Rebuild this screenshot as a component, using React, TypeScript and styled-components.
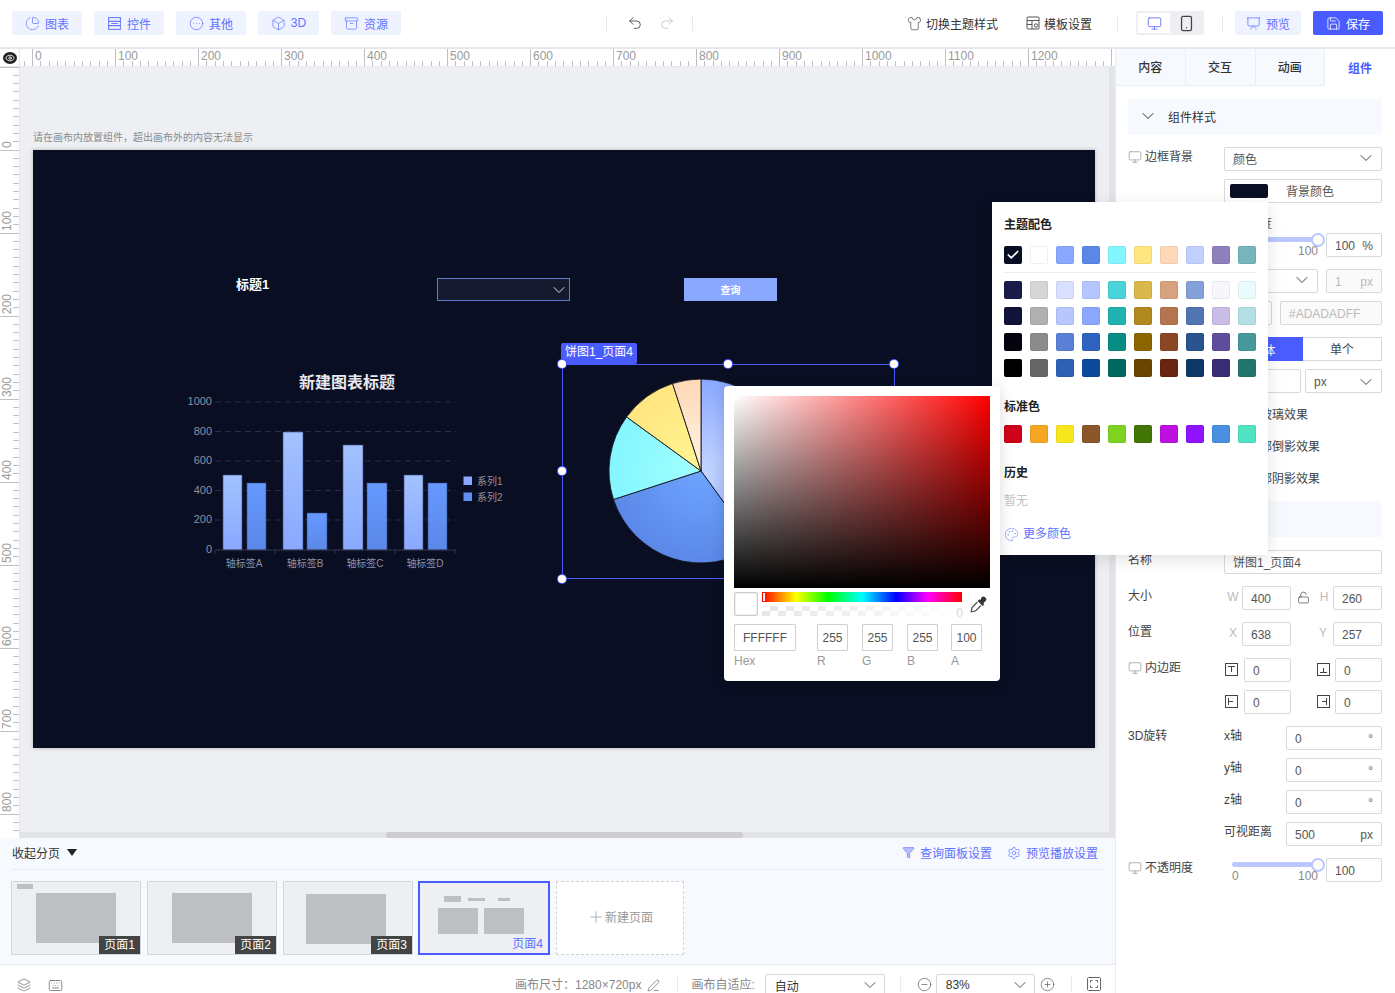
import React from "react";
import styled, { createGlobalStyle } from "styled-components";
import {
  Archive, Box, ChartPie, Check, ChevronDown, CircleEllipsis, CircleMinus, CirclePlus, Eye, Funnel, Keyboard, Layers,
  LockOpen, Monitor, Palette, PenLine, Plus, Presentation, Redo2, Save, Settings, Shirt, Smartphone, Undo2,
} from "lucide-react";

const BLUE = "#4a5cff";
const FONT = `"Liberation Sans", "Noto Sans CJK SC", sans-serif`;

const Global = createGlobalStyle`
  html, body { margin: 0; padding: 0; height: 993px; overflow: hidden; background: #fff; }
  body { font-family: ${FONT}; font-size: 12px; color: #333; }
  * { box-sizing: border-box; }
`;

const Page = styled.div`
  position: relative; width: 1395px; height: 993px; overflow: hidden;
  display: flex; flex-direction: column;
`;

/* ---------- top bar ---------- */
const TopBar = styled.header`
  height: 49px; flex: none; display: flex; align-items: center; padding: 0 12px 1px 12px;
  border-bottom: 2px solid #e6e7ec; background: #fff;
`;
const ToolGroup = styled.div`display: flex; gap: 12px;`;
const SoftButton = styled.button<{ $w: number }>`
  width: ${p => p.$w}px; height: 24px; border: 0; border-radius: 2px; background: #eff3ff; color: #5f70ff;
  font: 12px ${FONT}; display: flex; align-items: center; justify-content: center; gap: 5px; padding: 0;
  svg { color: #6a7bff; }
`;
const SaveButton = styled(SoftButton)`background: ${BLUE}; color: #fff; margin-left: 12px; svg { color: #fff; }`;
const VSep = styled.i<{ $ml: number; $mr: number }>`
  width: 1px; height: 16px; background: #e8e9ed; margin-left: ${p => p.$ml}px; margin-right: ${p => p.$mr}px; flex: none;
`;
const HistoryIcons = styled.div`display: flex; gap: 16px; width: 48px; color: #444;`;
const TextAction = styled.div<{ $ml: number }>`
  display: flex; align-items: center; gap: 4px; margin-left: ${p => p.$ml}px; color: #333; svg { color: #555; }
`;
const DeviceToggle = styled.div`
  width: 68px; height: 24px; padding: 2px; background: #eeeff3; border-radius: 2px; display: flex;
`;
const DeviceBtn = styled.div<{ $on?: boolean }>`
  width: 32px; display: flex; align-items: center; justify-content: center;
  background: ${p => (p.$on ? "#fff" : "transparent")}; color: ${p => (p.$on ? "#5f70ff" : "#444")};
`;

/* ---------- body ---------- */
const Body = styled.div`flex: 1; min-height: 0; display: flex;`;
const Editor = styled.main`width: 1115px; flex: none; display: flex; flex-direction: column;`;
const RulerRow = styled.div`height: 18px; flex: none; display: flex; background: #fff; border-bottom: 1px solid #e6e7ec;`;
const Corner = styled.div`
  width: 20px; flex: none; display: flex; align-items: center; justify-content: center; border-right: 1px solid #e6e7ec;
`;
const EyeBadge = styled.span`
  width: 14px; height: 12px; border-radius: 50%; background: #222; color: #fff; display: flex; align-items: center; justify-content: center;
`;
const RulerH = styled.svg`flex: 1; display: block; height: 17px; overflow: hidden;`;
const CanvasRow = styled.div`height: 771px; flex: none; display: flex;`;
const RulerV = styled.svg`width: 20px; flex: none; display: block; background: #fff;`;
const CanvasArea = styled.div`position: relative; flex: 1; background: #eeeff3; overflow: hidden;`;
const Hint = styled.div`position: absolute; left: 13px; top: 64px; font-size: 10px; line-height: 14px; color: #8b8b8b;`;
const Stage = styled.div`
  position: absolute; left: 13px; top: 83px; width: 1062px; height: 598px; background: #0a0e22;
  box-shadow: 0 0 4px rgba(0,0,0,.25);
`;
const ScrollV = styled.div`position: absolute; top: 0; bottom: 0; right: 0; width: 6px; background: #e3e4e8;`;
const ScrollH = styled.div`position: absolute; left: 0; right: 0; bottom: 0; height: 6px; background: #e3e4e8;`;
const ScrollThumb = styled.div`position: absolute; left: 366px; width: 357px; top: 0; bottom: 0; background: #cdcdd0; border-radius: 3px;`;

const StageTitle = styled.div`position: absolute; left: 203px; top: 126px; color: #fff; font-weight: 700; font-size: 13px; line-height: 18px;`;
const StageSelect = styled.div`
  position: absolute; left: 404px; top: 128px; width: 133px; height: 23px; background: #151a2e; border: 1px solid #5b7cc9;
  display: flex; align-items: center; justify-content: flex-end; color: #ddd;
`;
const StageButton = styled.div`
  position: absolute; left: 651px; top: 128px; width: 93px; height: 23px; background: #8aa8ff; color: #fff; font-size: 10px; font-weight: 700;
  display: flex; align-items: center; justify-content: center;
`;
const ChartSvg = styled.svg`position: absolute; display: block;`;
const Selection = styled.div`
  position: absolute; left: 529px; top: 214px; width: 333px; height: 215px; border: 1px solid ${BLUE};
`;
const SelLabel = styled.div`
  position: absolute; left: -2px; top: -22px; width: 76px; height: 21px; background: ${BLUE}; color: #fff; border-radius: 2px;
  font-size: 12px; line-height: 19px; text-align: center; white-space: nowrap;
`;
const Handle = styled.i<{ $x: number; $y: number }>`
  position: absolute; left: ${p => p.$x}px; top: ${p => p.$y}px; width: 8px; height: 8px; margin: -4px 0 0 -4px; border-radius: 50%;
  background: #fff; box-shadow: 0 0 0 1px ${BLUE};
`;

/* ---------- pages ---------- */
const PagesPanel = styled.section`
  height: 127px; flex: none; background: #f6f9fd; padding: 0 12px; border-bottom: 1px solid #e6e7ec;
`;
const PagesHead = styled.div`
  height: 32px; display: flex; align-items: center; justify-content: space-between; border-bottom: 1px solid #e8ecf2;
  padding: 0 5px 2px 0;
`;
const Collapse = styled.div`display: flex; align-items: center; gap: 7px; color: #333;`;
const Tri = styled.i`width: 0; height: 0; border: 5.5px solid transparent; border-top: 7px solid #222; border-bottom: 0;`;
const Links = styled.div`display: flex; align-items: center; color: #5f70ff; gap: 5px; svg { color: #6a7bff; }`;
const LinkGap = styled.span`width: 5px;`;
const Thumbs = styled.div`display: flex; margin: 11px 0 0 -1px; gap: 6px;`;
const Thumb = styled.div<{ $active?: boolean }>`
  position: relative; width: ${p => (p.$active ? 132 : 130)}px; height: 74px; background: #eeeff3; margin-left: ${p => (p.$active ? -1 : 0)}px;
  border: ${p => (p.$active ? `2px solid ${BLUE}` : "1px solid #d4d6db")}; overflow: hidden;
`;
const Ghost = styled.i<{ $x: number; $y: number; $w: number; $h: number }>`
  position: absolute; left: ${p => p.$x}px; top: ${p => p.$y}px; width: ${p => p.$w}px; height: ${p => p.$h}px; background: #bebfc3;
`;
const ThumbName = styled.span<{ $active?: boolean }>`
  position: absolute; right: 0; bottom: 0; width: 41px; height: 18px; line-height: 18px; text-align: center;
  background: ${p => (p.$active ? "transparent" : "#444")}; color: ${p => (p.$active ? "#5f70ff" : "#fff")};
`;
const NewPage = styled.div`
  width: 128px; height: 74px; border: 1px dashed #d0d2d8; background: #fff; color: #999; display: flex; align-items: center; justify-content: center;
  padding-bottom: 3px;
`;

/* ---------- status ---------- */
const Status = styled.footer`flex: 1; min-height: 0; display: flex; align-items: flex-start; background: #fff; position: relative; color: #888;`;
const StatusLeft = styled.div`display: flex; gap: 17px; padding: 13px 0 0 17px; color: #666; width: 515px;`;
const StatusText = styled.div`display: flex; align-items: center; padding-top: 12px; line-height: 16px; gap: 6px; white-space: nowrap; svg { color: #666; }`;
const StatusSelect = styled.div<{ $w: number; $ml: number }>`
  width: ${p => p.$w}px; margin-left: ${p => p.$ml}px; height: 24px; margin-top: 9px; border: 1px solid #d9d9d9; border-radius: 2px;
  display: flex; align-items: center; justify-content: space-between; padding: 0 4px 2px 9px; color: #333; flex: none;
  svg { color: #555; }
`;
const StatusIcon = styled.span<{ $ml: number; $mr?: number }>`margin: 12px ${p => p.$mr || 0}px 0 ${p => p.$ml}px; display: flex; color: #666;`;
const StatusSep = styled(VSep)`margin-top: 12px; height: 14px;`;

/* ---------- right panel ---------- */
const Panel = styled.aside`
  width: 280px; flex: none; border-left: 1px solid #e8eef5; background: #fff; display: flex; flex-direction: column;
`;
const Tabs = styled.nav`height: 37px; display: flex; background: #f6f9fd; border-bottom: 1px solid #e8eef5; flex: none;`;
const Tab = styled.div<{ $on?: boolean }>`
  width: 70px; display: flex; align-items: center; justify-content: center; font-weight: ${p => (p.$on ? 700 : 500)};
  color: ${p => (p.$on ? BLUE : "#333")}; background: ${p => (p.$on ? "#fff" : "transparent")}; padding-bottom: 1px;
  border-right: ${p => (p.$on ? "0" : "1px solid #e8eef5")}; margin-bottom: ${p => (p.$on ? "-1px" : "0")};
`;
const PanelBody = styled.div`padding: 13px 13px 0 12px;`;
const SectionHead = styled.div<{ $mt?: number; $mb?: number }>`
  height: 36px; background: #f6f9fd; display: flex; align-items: center; padding: 0 0 2px 10px; gap: 10px; color: #333;
  margin-top: ${p => p.$mt ?? 0}px; margin-bottom: ${p => p.$mb ?? 12}px;
`;
const Row = styled.div<{ $mb?: number }>`display: flex; align-items: flex-start; height: 24px; margin-bottom: ${p => p.$mb ?? 8}px;`;
const RowLabel = styled.div`
  width: 96px; flex: none; height: 18px; padding-top: 2px; line-height: 16px; display: flex; align-items: center; gap: 3px; color: #444; svg { color: #888; }
`;
const Field = styled.div<{ $w?: number; $ml?: number; $muted?: boolean; $cjk?: boolean }>`
  ${p => (p.$w ? `width:${p.$w}px;flex:none;` : "flex:1;")}
  margin-left: ${p => p.$ml ?? 0}px; height: 24px; border: 1px solid #d9d9d9; border-radius: 2px;
  padding: ${p => (p.$cjk ? "0 8px 2px" : "2px 8px 0")};
  display: flex; align-items: center; justify-content: space-between; color: ${p => (p.$muted ? "#bbb" : "#555")};
  background: ${p => (p.$muted ? "#fafafa" : "#fff")}; white-space: nowrap;
  svg { color: #444; margin-right: -3px; }
`;
const Swatch = styled.i`width: 38px; height: 14px; background: #0a0e22; border-radius: 2px; margin: 2px 0 0 -3px;`;
const FieldCaption = styled.span`margin-right: 39px;`;
const Axis = styled.span<{ $w: number }>`
  width: ${p => p.$w}px; flex: none; color: #444; height: 18px; padding-top: 2px; line-height: 16px;
`;
const SizeMark = styled.span<{ $w: number; $pl?: number; $pr?: number }>`
  width: ${p => p.$w}px; flex: none; display: flex; align-items: center; justify-content: center; color: #bbb; font-size: 12px; height: 24px;
  padding: 0 ${p => p.$pr ?? 0}px 2px ${p => p.$pl ?? 0}px;
`;
const Sub = styled.div`margin-left: 108px; height: 22px; line-height: 26px; color: #666;`;
const SliderBox = styled.div<{ $ml: number }>`position: relative; width: 94px; flex: none; height: 24px; margin-left: ${p => p.$ml}px;`;
const SliderTrack = styled.i`
  position: absolute; left: 0; right: 8px; top: 4px; height: 5px; border-radius: 3px; background: #bac8ff;
`;
const SliderThumb = styled.i`
  position: absolute; right: 1px; top: -0.5px; width: 14px; height: 14px; border-radius: 50%; background: #fff; border: 2px solid #bac8ff;
`;
const SliderNum = styled.span<{ $left: number }>`position: absolute; left: ${p => p.$left}px; top: 11px; line-height: 14px; color: #888;`;
const ModeOn = styled.div`
  width: 79px; height: 24px; background: ${BLUE}; color: #fff; display: flex; align-items: center; justify-content: center; border-radius: 2px 0 0 2px;
`;
const ModeOff = styled.div`
  width: 79px; height: 24px; border: 1px solid #d9d9d9; border-left: 0; display: flex; align-items: center; justify-content: center; color: #444; padding-bottom: 2px;
`;
const CheckRow = styled.label`display: flex; align-items: center; gap: 8px; height: 24px; margin: 0 0 8px 98px; color: #444; padding-bottom: 2px;`;
const CheckBoxMark = styled.i`width: 14px; height: 14px; border: 1px solid #d9d9d9; border-radius: 2px;`;

/* ---------- popovers ---------- */
const ThemePop = styled.div`
  position: absolute; left: 992px; top: 202px; width: 276px; height: 353px; background: #fff; padding: 15px 12px 0;
  box-shadow: 0 4px 16px rgba(0,0,0,.12); z-index: 5;
`;
const PopTitle = styled.div<{ $mt?: number }>`font-weight: 700; color: #222; line-height: 16px; margin-top: ${p => p.$mt ?? 0}px;`;
const SwatchRow = styled.div<{ $mt?: number }>`display: flex; gap: 8px; margin-top: ${p => p.$mt ?? 8}px;`;
const Chip = styled.div<{ $c: string }>`
  width: 18px; height: 18px; border-radius: 2px; background: ${p => p.$c}; box-shadow: inset 0 0 0 1px rgba(0,0,0,.06);
  display: flex; align-items: center; justify-content: center; color: #fff;
`;
const PopRule = styled.div`height: 1px; background: #eee; margin-top: 8px;`;
const Empty = styled.div`color: #c4c4c4; line-height: 16px; margin-top: 12px;`;
const MoreColor = styled.div`display: flex; align-items: center; gap: 4px; color: #5f70ff; margin-top: 17px; line-height: 16px; svg { color: #8f9cff; }`;

const PickerPop = styled.div`
  position: absolute; left: 724px; top: 386px; width: 276px; height: 295px; background: #fff; border-radius: 4px; padding: 10px;
  box-shadow: 0 2px 14px rgba(0,0,0,.15); z-index: 6;
`;
const Sat = styled.div`
  width: 256px; height: 192px;
  background: linear-gradient(to top, #000, rgba(0,0,0,0)), linear-gradient(to right, #fff, rgba(255,255,255,0)), #f00;
`;
const SliderLine = styled.div`display: flex; margin-top: 4px;`;
const Preview = styled.div`width: 24px; height: 24px; border: 1px solid #ccc; border-radius: 2px; background: #fff; box-shadow: inset 0 0 2px rgba(0,0,0,.2);`;
const Bars = styled.div`width: 200px; margin-left: 4px; position: relative;`;
const Hue = styled.div`
  height: 10px; position: relative;
  background: linear-gradient(to right, #f00 0%, #ff0 17%, #0f0 33%, #0ff 50%, #00f 67%, #f0f 83%, #f00 100%);
  &::before { content: ""; position: absolute; left: 1px; top: 1px; bottom: 1px; width: 2px; background: #fff; }
`;
const Alpha = styled.div`
  height: 10px; margin-top: 4px;
  background:
    linear-gradient(to right, rgba(255,255,255,0), #fff),
    repeating-conic-gradient(#e6e6e6 0% 25%, #fff 0% 50%) 0 0 / 16px 10px;
`;
const AlphaZero = styled.span`position: absolute; right: -1px; bottom: -4px; color: #d8d8d8; line-height: 14px;`;
const Dropper = styled.div`margin: 0 0 0 7px; width: 20px; display: flex; padding-top: 2px;`;
const Channels = styled.div`display: flex; margin-top: 8px;`;
const ChannelCol = styled.div<{ $w: number; $mr: number }>`width: ${p => p.$w}px; margin-right: ${p => p.$mr}px; flex: none;`;
const ChannelBox = styled.div`
  height: 27px; border: 1px solid #d0d0d0; border-radius: 1px; display: flex; align-items: center; justify-content: center; color: #555;
`;
const ChannelName = styled.div`color: #999; line-height: 14px; margin-top: 3px;`;

/* ---------- data ---------- */
const theme0 = ["#0a0e24", "#ffffff", "#8aa8ff", "#5b88e8", "#84f6ff", "#ffe680", "#ffd8b8", "#c0d0ff", "#8f7fbc", "#76b5bc"];
const themeRows = [
  ["#1a1c4a", "#d6d6d6", "#d8dfff", "#b5c5ff", "#4ad3d8", "#d8b84a", "#d9a27e", "#84a0d8", "#f8f6fd", "#ebfcfd"],
  ["#10143a", "#b0b0b0", "#b8c6ff", "#8aa8ff", "#20b2b0", "#b08a20", "#b4744e", "#5274b2", "#c9bce6", "#b2dee4"],
  ["#03040f", "#8c8c8c", "#5a80d8", "#2f63c0", "#078c84", "#8c6400", "#8c4626", "#2a5490", "#5e4d9a", "#46989a"],
  ["#000000", "#666666", "#2d5fb4", "#0e4a9a", "#00685e", "#684400", "#68240f", "#0e3868", "#382c74", "#22746f"],
];
const standard = ["#d0021b", "#f5a623", "#f8e71c", "#8b572a", "#7ed321", "#417505", "#bd10e0", "#9013fe", "#4a90e2", "#50e3c2"];

const range = (n: number) => Array.from({ length: n }, (_, i) => i);

const TopRuler = () => (
  <RulerH viewBox="0 0 1095 17" width={1095} height={17}>
    {range(132).map(i => {
      const x = 4.3 + i * 8.3;
      const major = i % 10 === 1;
      return <line key={i} x1={x} x2={x} y1={major ? 0 : 12} y2={17} stroke="#bfc0c4" strokeWidth={1} shapeRendering="crispEdges" />;
    })}
    {range(13).map(i => (
      <text key={i} x={15 + i * 83} y={10.5} fontSize={12} fill="#9a9a9a" fontFamily={FONT}>{i * 100}</text>
    ))}
  </RulerH>
);

const LeftRuler = () => (
  <RulerV viewBox="0 0 20 771" width={20} height={771}>
    <line x1={19.5} x2={19.5} y1={0} y2={771} stroke="#e6e7ec" />
    {range(93).map(i => {
      const y = i * 8.3;
      const major = i % 10 === 0;
      return <line key={i} x1={major ? 0 : 13} x2={19} y1={y} y2={y} stroke="#bfc0c4" strokeWidth={1} shapeRendering="crispEdges" />;
    })}
    {range(9).map(i => (
      <text key={i} fontSize={12} fill="#9a9a9a" fontFamily={FONT} transform={`translate(11 ${81 + i * 83}) rotate(-90)`}>{i * 100}</text>
    ))}
  </RulerV>
);

const bars = [
  [223, 242, 475, 1], [247, 266, 483, 2], [283, 303, 432, 1], [307, 327, 513, 2],
  [343, 363, 445, 1], [367, 387, 483, 2], [404, 423, 475, 1], [428, 447, 483, 2],
];

const BarChart = () => (
  <ChartSvg style={{ left: 97, top: 210 }} width={400} height={220} viewBox="130 360 400 220">
    <defs>
      <linearGradient id="b1" x1="0" y1="0" x2="0" y2="1"><stop offset="0" stopColor="#a2c2ff" /><stop offset="1" stopColor="#8aa8ff" /></linearGradient>
      <linearGradient id="b2" x1="0" y1="0" x2="0" y2="1"><stop offset="0" stopColor="#6699ff" /><stop offset="1" stopColor="#5b88e8" /></linearGradient>
    </defs>
    <text x={347} y={388} textAnchor="middle" fontSize={16} fontWeight={700} fill="#e8e8ee" fontFamily={FONT}>新建图表标题</text>
    {[402, 431.5, 461, 490.5, 520].map(y => (
      <line key={y} x1={215} x2={456} y1={y} y2={y} stroke="#2a2e46" strokeDasharray="6 4" />
    ))}
    {[[1000, 402], [800, 431.5], [600, 461], [400, 490.5], [200, 520], [0, 550]].map(([v, y]) => (
      <text key={v} x={212} y={y + 3} textAnchor="end" fontSize={11} fill="#8d90a4" fontFamily={FONT}>{v}</text>
    ))}
    {bars.map(([a, b, t, s]) => (
      <rect key={a} x={a} y={t} width={b - a} height={550 - t} fill={`url(#b${s})`} stroke="#3a4a80" strokeWidth={0.6} />
    ))}
    <line x1={215} x2={456} y1={550} y2={550} stroke="#32354e" strokeWidth={1.2} />
    {[215, 275, 335, 395, 455].map(x => <line key={x} x1={x} x2={x} y1={550} y2={554} stroke="#32354e" />)}
    {([["轴标签A", 244], ["轴标签B", 305], ["轴标签C", 365], ["轴标签D", 425]] as [string, number][]).map(([t, x]) => (
      <text key={t} x={x} y={567} textAnchor="middle" fontSize={10} fill="#8d90a4" fontFamily={FONT}>{t}</text>
    ))}
    <rect x={463.5} y={476.5} width={8.5} height={8.5} fill="#8aa8ff" />
    <rect x={463.5} y={492.5} width={8.5} height={8.5} fill="#5f90f0" />
    <text x={477} y={484.5} fontSize={10} fill="#8d90a4" fontFamily={FONT}>系列1</text>
    <text x={477} y={500.5} fontSize={10} fill="#8d90a4" fontFamily={FONT}>系列2</text>
  </ChartSvg>
);

const polar = (deg: number, r = 92) => {
  const a = ((deg - 90) * Math.PI) / 180;
  return [701 + r * Math.cos(a), 471 + r * Math.sin(a)];
};
const slice = (s: number, e: number) => {
  const [x1, y1] = polar(s);
  const [x2, y2] = polar(e);
  return `M701 471L${x1} ${y1}A92 92 0 ${e - s > 180 ? 1 : 0} 1 ${x2} ${y2}Z`;
};
const pieData: [number, number, string, string][] = [
  [0, 144, "#c4d6ff", "#8aa8ff"], [144, 252, "#6ea4ff", "#5b88e8"], [252, 306, "#a2ffff", "#84f6ff"],
  [306, 342, "#fff592", "#ffe680"], [342, 360, "#fff6e2", "#ffd8b8"],
];
const PieChart = () => (
  <ChartSvg style={{ left: 567, top: 225 }} width={200} height={200} viewBox="600 375 200 200">
    <defs>
      {pieData.map((d, i) => (
        <radialGradient key={i} id={`p${i}`} gradientUnits="userSpaceOnUse" cx={701} cy={471} r={92}>
          <stop offset="0" stopColor={d[2]} /><stop offset="1" stopColor={d[3]} />
        </radialGradient>
      ))}
    </defs>
    {pieData.map((d, i) => <path key={i} d={slice(d[0], d[1])} fill={`url(#p${i})`} stroke="#15171f" strokeWidth={0.9} />)}
  </ChartSvg>
);

const CtlIcon = () => (
  <svg width="15" height="15" viewBox="0 0 14 14" fill="none" stroke="currentColor"><rect x="1.5" y="1.5" width="11" height="11" /><path d="M1.5 5h11M1.5 9h11M4 7h6" /></svg>
);
const TemplateIcon = () => (
  <svg width="14" height="14" viewBox="0 0 14 14" fill="none" stroke="currentColor"><rect x="1" y="1" width="12" height="12" rx="1" /><path d="M1 4.5h12M6 4.5V13M1 8.5h5" /><circle cx="10" cy="9.5" r="1.7" /></svg>
);
const PadIcon = ({ d }: { d: string }) => (
  <svg width="13" height="13" viewBox="0 0 13 13" fill="none" stroke="#444"><rect x="0.5" y="0.5" width="12" height="12" /><path d={d} /></svg>
);
const DropperIcon = () => (
  <svg width="20" height="20" viewBox="0 0 20 20">
    <path d="M12.5 3.5a2.5 2.5 0 0 1 3.8 0a2.5 2.5 0 0 1 0 3.8l-2 2l1 1l-1.6 1.6l-5-5l1.6-1.6l1 1z" fill="#333" />
    <path d="M8.5 8L3 13.5L2.2 17.8L6.5 17L12 11.5" fill="none" stroke="#555" strokeWidth="1.3" />
  </svg>
);
const FullscreenIcon = () => (
  <svg width="14" height="14" viewBox="0 0 14 14" fill="none" stroke="#666"><rect x="0.5" y="0.5" width="13" height="13" rx="1" /><path d="M3.5 5.5v-2h2M8.5 3.5h2v2M10.5 8.5v2h-2M5.5 10.5h-2v-2" /></svg>
);

const Checks = ["毛玻璃效果", "底部倒影效果", "外部阴影效果"];

const App = () => (
  <Page>
    <Global />
    <TopBar>
      <ToolGroup>
        <SoftButton $w={70}><ChartPie size={15} strokeWidth={1.2} />图表</SoftButton>
        <SoftButton $w={70}><CtlIcon />控件</SoftButton>
        <SoftButton $w={70}><CircleEllipsis size={15} strokeWidth={1.2} />其他</SoftButton>
        <SoftButton $w={61}><Box size={15} strokeWidth={1.2} />3D</SoftButton>
        <SoftButton $w={70}><Archive size={15} strokeWidth={1.2} />资源</SoftButton>
      </ToolGroup>
      <VSep $ml={205} $mr={20} />
      <HistoryIcons>
        <Undo2 size={16} strokeWidth={1.3} />
        <Redo2 size={16} strokeWidth={1.3} color="#c4c4c4" />
      </HistoryIcons>
      <VSep $ml={17} $mr={0} />
      <TextAction $ml={214}><Shirt size={15} strokeWidth={1.2} />切换主题样式</TextAction>
      <TextAction $ml={28}><TemplateIcon />模板设置</TextAction>
      <VSep $ml={25} $mr={18} />
      <DeviceToggle>
        <DeviceBtn $on><Monitor size={15} strokeWidth={1.4} /></DeviceBtn>
        <DeviceBtn><Smartphone size={17} strokeWidth={1.8} /></DeviceBtn>
      </DeviceToggle>
      <VSep $ml={18} $mr={12} />
      <SoftButton $w={66}><Presentation size={15} strokeWidth={1.3} />预览</SoftButton>
      <SaveButton $w={70}><Save size={15} strokeWidth={1.3} />保存</SaveButton>
    </TopBar>

    <Body>
      <Editor>
        <RulerRow>
          <Corner><EyeBadge><Eye size={10} strokeWidth={2} /></EyeBadge></Corner>
          <TopRuler />
        </RulerRow>
        <CanvasRow>
          <LeftRuler />
          <CanvasArea>
            <Hint>请在画布内放置组件，超出画布外的内容无法显示</Hint>
            <Stage>
              <StageTitle>标题1</StageTitle>
              <StageSelect><ChevronDown size={20} strokeWidth={1.2} /></StageSelect>
              <StageButton>查询</StageButton>
              <BarChart />
              <PieChart />
              <Selection>
                <SelLabel>饼图1_页面4</SelLabel>
                <Handle $x={-1} $y={-1} /><Handle $x={165} $y={-1} /><Handle $x={331} $y={-1} />
                <Handle $x={-1} $y={106} /><Handle $x={-1} $y={214} />
              </Selection>
            </Stage>
            <ScrollV />
            <ScrollH><ScrollThumb /></ScrollH>
          </CanvasArea>
        </CanvasRow>
        <PagesPanel>
          <PagesHead>
            <Collapse>收起分页<Tri /></Collapse>
            <Links>
              <Funnel size={13} strokeWidth={1.4} fill="#b8c0ff" /><span>查询面板设置</span><LinkGap />
              <Settings size={14} strokeWidth={1.3} /><span>预览播放设置</span>
            </Links>
          </PagesHead>
          <Thumbs>
            <Thumb><Ghost $x={5} $y={2} $w={16} $h={5} /><Ghost $x={24} $y={11} $w={80} $h={50} /><ThumbName>页面1</ThumbName></Thumb>
            <Thumb><Ghost $x={24} $y={11} $w={80} $h={50} /><ThumbName>页面2</ThumbName></Thumb>
            <Thumb><Ghost $x={22} $y={12} $w={80} $h={50} /><ThumbName>页面3</ThumbName></Thumb>
            <Thumb $active>
              <Ghost $x={24} $y={13} $w={17} $h={6} /><Ghost $x={48} $y={15} $w={17} $h={3} /><Ghost $x={78} $y={15} $w={12} $h={3} />
              <Ghost $x={18} $y={25} $w={40} $h={26} /><Ghost $x={64} $y={25} $w={40} $h={26} />
              <ThumbName $active>页面4</ThumbName>
            </Thumb>
            <NewPage><Plus size={18} strokeWidth={1} />新建页面</NewPage>
          </Thumbs>
        </PagesPanel>
        <Status>
          <StatusLeft>
            <Layers size={14} strokeWidth={1.2} /><Keyboard size={15} strokeWidth={1.2} />
          </StatusLeft>
          <StatusText>画布尺寸：1280×720px<PenLine size={13} strokeWidth={1.3} /></StatusText>
          <StatusSep $ml={17} $mr={13} />
          <StatusText>画布自适应:</StatusText>
          <StatusSelect $w={120} $ml={10}><span>自动</span><ChevronDown size={20} strokeWidth={1.2} /></StatusSelect>
          <StatusSep $ml={15} $mr={0} />
          <StatusIcon $ml={16}><CircleMinus size={15} strokeWidth={1.2} /></StatusIcon>
          <StatusSelect $w={99} $ml={4}><span>83%</span><ChevronDown size={20} strokeWidth={1.2} /></StatusSelect>
          <StatusIcon $ml={5}><CirclePlus size={15} strokeWidth={1.2} /></StatusIcon>
          <StatusSep $ml={16} $mr={0} />
          <StatusIcon $ml={15}><FullscreenIcon /></StatusIcon>
        </Status>
      </Editor>

      <Panel>
        <Tabs>
          <Tab>内容</Tab><Tab>交互</Tab><Tab>动画</Tab><Tab $on>组件</Tab>
        </Tabs>
        <PanelBody>
          <SectionHead><ChevronDown size={20} strokeWidth={1.2} />组件样式</SectionHead>
          <Row>
            <RowLabel><Monitor size={14} strokeWidth={1.1} />边框背景</RowLabel>
            <Field $cjk><span>颜色</span><ChevronDown size={20} strokeWidth={1.2} /></Field>
          </Row>
          <Row>
            <RowLabel />
            <Field $cjk><Swatch /><FieldCaption>背景颜色</FieldCaption></Field>
          </Row>
          <Sub>透明度</Sub>
          <Row $mb={12}>
            <SliderBox $ml={104}>
              <SliderTrack /><SliderThumb />
              <SliderNum $left={66}>100</SliderNum>
            </SliderBox>
            <Field $w={56}><span>100</span><span>%</span></Field>
          </Row>
          <Row>
            <RowLabel>边框</RowLabel>
            <Field $w={94} $cjk><span>实线</span><ChevronDown size={20} strokeWidth={1.2} /></Field>
            <Field $w={56} $ml={8} $muted><span>1</span><span>px</span></Field>
          </Row>
          <Row $mb={12}>
            <RowLabel />
            <Field $w={48} />
            <Field $w={102} $ml={8} $muted><span>#ADADADFF</span></Field>
          </Row>
          <Row>
            <RowLabel>圆角</RowLabel>
            <ModeOn>整体</ModeOn><ModeOff>单个</ModeOff>
          </Row>
          <Row $mb={9}>
            <RowLabel />
            <Field $w={77}>0</Field>
            <Field $w={77} $ml={4}><span>px</span><ChevronDown size={20} strokeWidth={1.2} /></Field>
          </Row>
          {Checks.map(c => <CheckRow key={c}><CheckBoxMark />{c}</CheckRow>)}
          <SectionHead $mt={11} $mb={13}><ChevronDown size={20} strokeWidth={1.2} />组件属性</SectionHead>
          <Row $mb={12}><RowLabel>名称</RowLabel><Field $cjk>饼图1_页面4</Field></Row>
          <Row $mb={12}>
            <RowLabel>大小</RowLabel>
            <SizeMark $w={18}>W</SizeMark><Field $w={49}>400</Field>
            <SizeMark $w={24}><LockOpen size={13} strokeWidth={1.3} color="#444" /></SizeMark>
            <SizeMark $w={18}>H</SizeMark><Field $w={49}>260</Field>
          </Row>
          <Row $mb={12}>
            <RowLabel>位置</RowLabel>
            <SizeMark $w={18}>X</SizeMark><Field $w={49}>638</Field>
            <SizeMark $w={42} $pl={22}>Y</SizeMark><Field $w={49}>257</Field>
          </Row>
          <Row>
            <RowLabel><Monitor size={14} strokeWidth={1.1} />内边距</RowLabel>
            <SizeMark $w={20} $pr={6}><PadIcon d="M3 3.5h7M6.5 3.5V9" /></SizeMark><Field $w={47}>0</Field>
            <SizeMark $w={44} $pl={20}><PadIcon d="M3 9.5h7M6.5 9.5V5" /></SizeMark><Field $w={47}>0</Field>
          </Row>
          <Row $mb={12}>
            <RowLabel />
            <SizeMark $w={20} $pr={6}><PadIcon d="M3.5 3v7M3.5 6.5H8" /></SizeMark><Field $w={47}>0</Field>
            <SizeMark $w={44} $pl={20}><PadIcon d="M9.5 3v7M9.5 6.5H5" /></SizeMark><Field $w={47}>0</Field>
          </Row>
          <Row><RowLabel>3D旋转</RowLabel><Axis $w={62}>x轴</Axis><Field><span>0</span><span>°</span></Field></Row>
          <Row><RowLabel /><Axis $w={62}>y轴</Axis><Field><span>0</span><span>°</span></Field></Row>
          <Row><RowLabel /><Axis $w={62}>z轴</Axis><Field><span>0</span><span>°</span></Field></Row>
          <Row $mb={12}><RowLabel /><Axis $w={62}>可视距离</Axis><Field><span>500</span><span>px</span></Field></Row>
          <Row>
            <RowLabel><Monitor size={14} strokeWidth={1.1} />不透明度</RowLabel>
            <SliderBox $ml={8}>
              <SliderTrack /><SliderThumb />
              <SliderNum $left={0}>0</SliderNum>
              <SliderNum $left={66}>100</SliderNum>
            </SliderBox>
            <Field $w={56}>100</Field>
          </Row>
        </PanelBody>
      </Panel>
    </Body>

    <ThemePop>
      <PopTitle>主题配色</PopTitle>
      <SwatchRow $mt={13}>
        {theme0.map((c, i) => <Chip key={c} $c={c}>{i === 0 && <Check size={14} strokeWidth={3} />}</Chip>)}
      </SwatchRow>
      <PopRule />
      {themeRows.map((r, i) => (
        <SwatchRow key={i}>{r.map((c, j) => <Chip key={j} $c={c} />)}</SwatchRow>
      ))}
      <PopTitle $mt={22}>标准色</PopTitle>
      <SwatchRow $mt={10}>{standard.map(c => <Chip key={c} $c={c} />)}</SwatchRow>
      <PopTitle $mt={22}>历史</PopTitle>
      <Empty>暂无</Empty>
      <MoreColor><Palette size={15} strokeWidth={1.2} />更多颜色</MoreColor>
    </ThemePop>

    <PickerPop>
      <Sat />
      <SliderLine>
        <Preview />
        <Bars><Hue /><Alpha /><AlphaZero>0</AlphaZero></Bars>
        <Dropper><DropperIcon /></Dropper>
      </SliderLine>
      <Channels>
        <ChannelCol $w={62} $mr={21}><ChannelBox>FFFFFF</ChannelBox><ChannelName>Hex</ChannelName></ChannelCol>
        <ChannelCol $w={31} $mr={14}><ChannelBox>255</ChannelBox><ChannelName>R</ChannelName></ChannelCol>
        <ChannelCol $w={31} $mr={14}><ChannelBox>255</ChannelBox><ChannelName>G</ChannelName></ChannelCol>
        <ChannelCol $w={31} $mr={13}><ChannelBox>255</ChannelBox><ChannelName>B</ChannelName></ChannelCol>
        <ChannelCol $w={31} $mr={0}><ChannelBox>100</ChannelBox><ChannelName>A</ChannelName></ChannelCol>
      </Channels>
    </PickerPop>
  </Page>
);

export default App;
